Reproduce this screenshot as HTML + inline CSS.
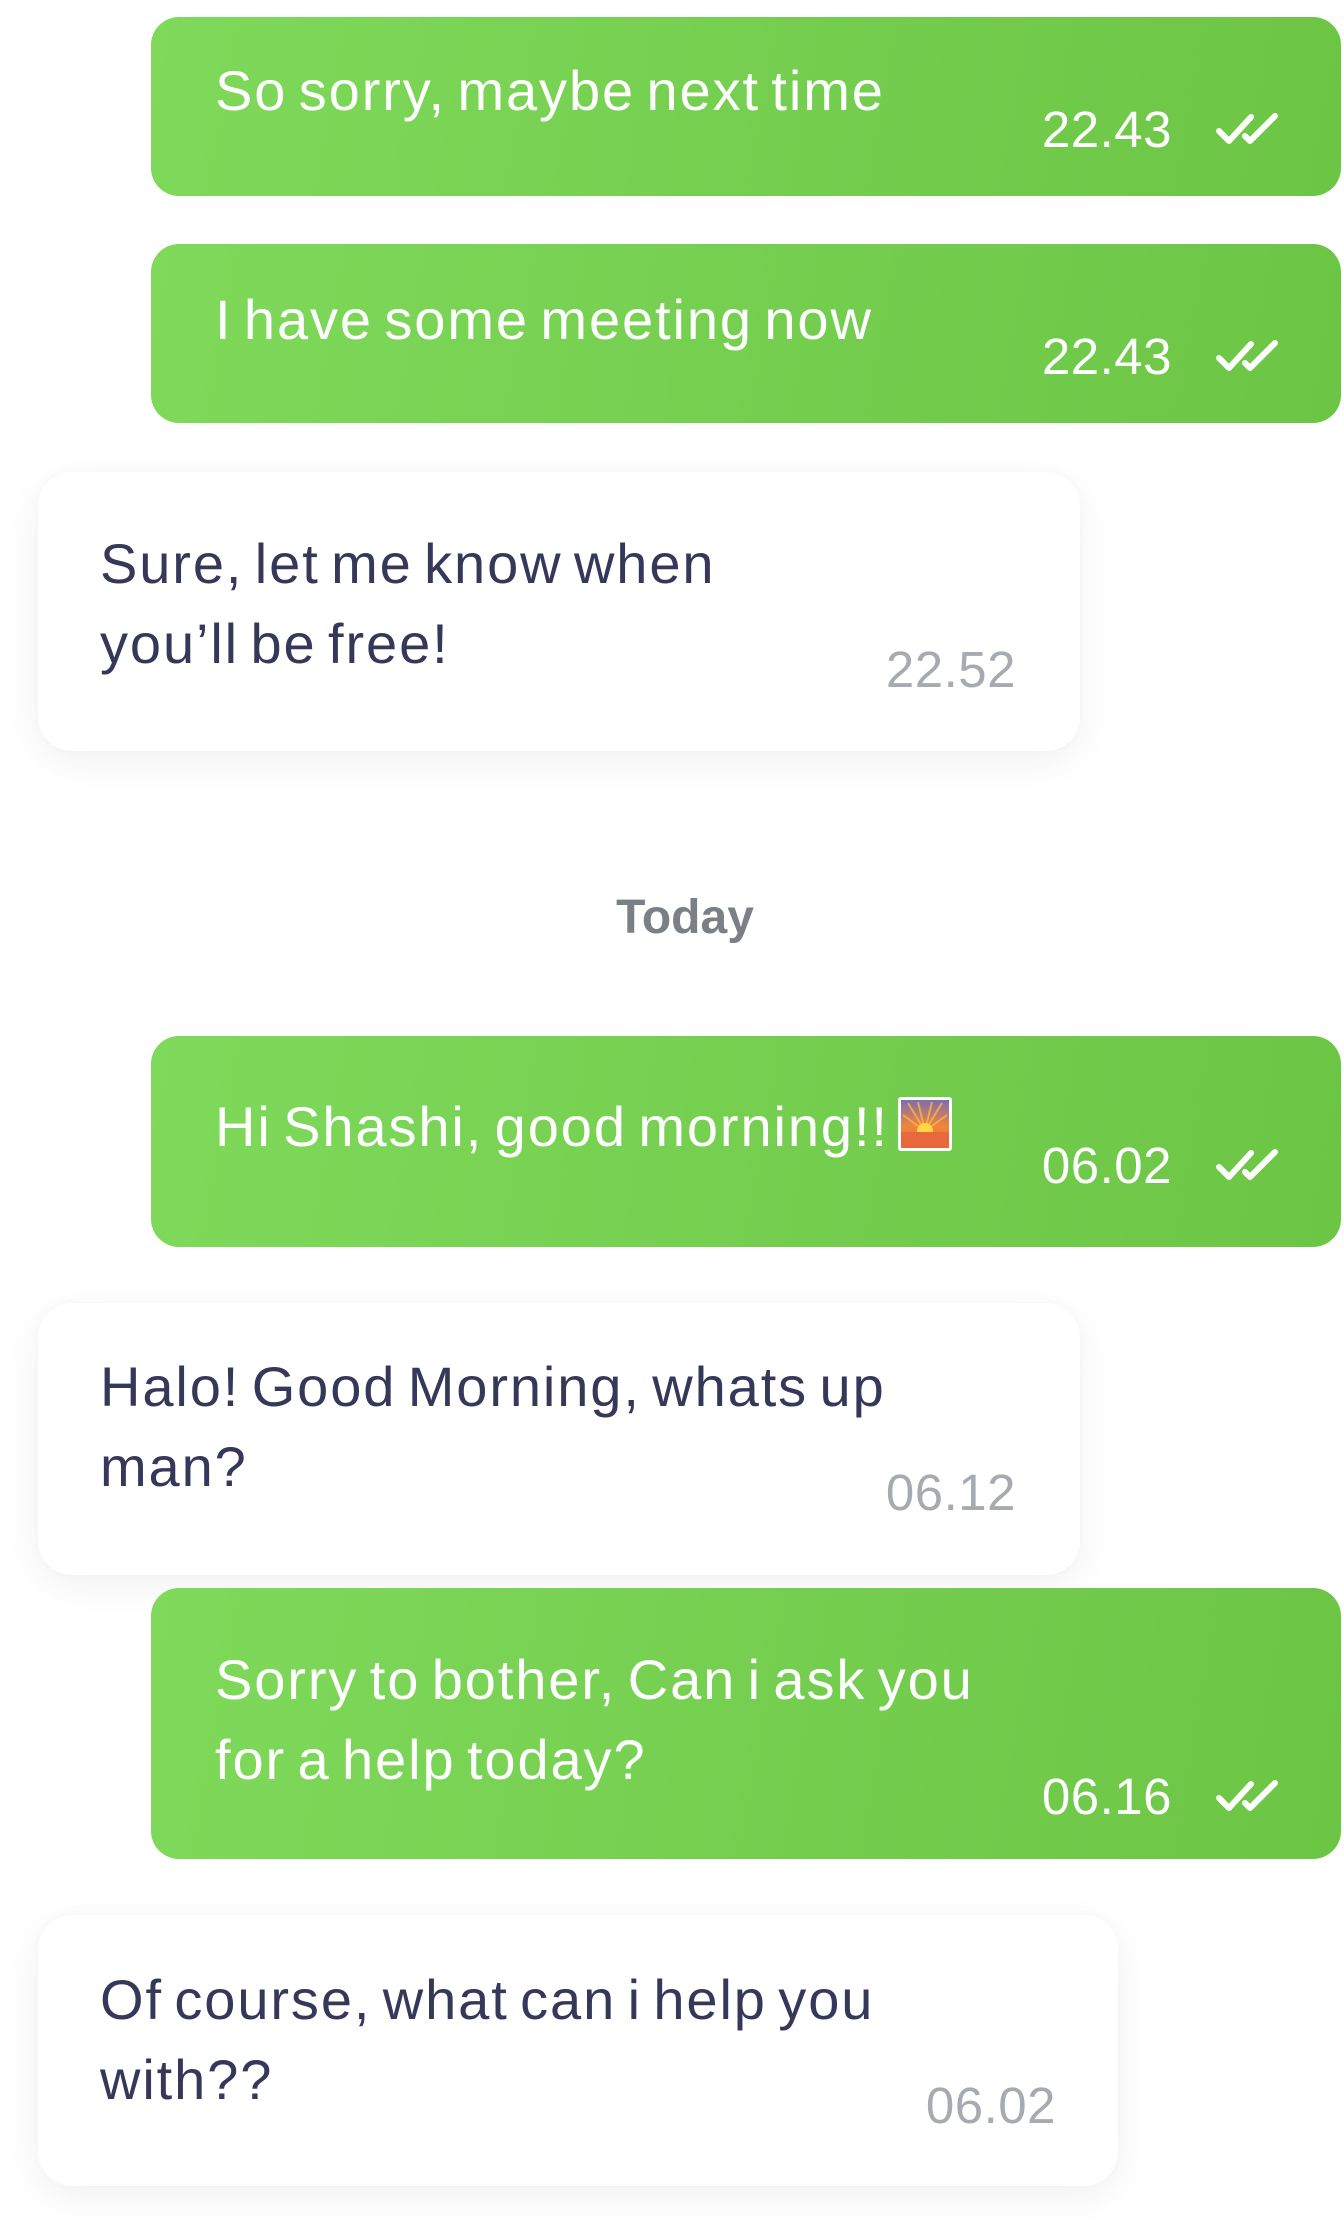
<!DOCTYPE html>
<html><head><meta charset="utf-8">
<style>
html,body{margin:0;padding:0;background:#fff;}
body{width:1344px;height:2240px;position:relative;overflow:hidden;font-family:"Liberation Sans",sans-serif;}
.g{position:absolute;left:151px;width:1190px;border-radius:28px;background:linear-gradient(100deg,#7fd95a 0%,#6cc545 100%);}
.w{position:absolute;left:38px;border-radius:34px;background:#fff;box-shadow:0 10px 40px rgba(0,0,0,0.06),0 0 10px rgba(0,0,0,0.02);}
.t{position:absolute;font-size:56px;line-height:80px;white-space:nowrap;letter-spacing:1.9px;word-spacing:-6px;}
.gt{color:#fff;}
.wt{color:#36385a;}
.tm{position:absolute;font-size:51px;line-height:60px;white-space:nowrap;text-align:right;letter-spacing:0.5px;}
.tmg{color:#fff;right:172px;}
.tmw{color:#a7abb1;}
.ck{position:absolute;width:66px;height:34px;left:1215px;}
</style></head><body>

<div class="g" style="top:17px;height:179px;"></div>
<div class="t gt" style="left:215px;top:51px;">So sorry, maybe next time</div>
<div class="tm tmg" style="top:100px;">22.43</div>
<svg class="ck" style="top:112px;" viewBox="0 0 66 34"><path d="M4 19 L14 29 L36 5 M30 24 L35 29 L60 4" fill="none" stroke="#fff" stroke-width="6" stroke-linecap="round" stroke-linejoin="round"/></svg>

<div class="g" style="top:244px;height:179px;"></div>
<div class="t gt" style="left:215px;top:280px;">I have some meeting now</div>
<div class="tm tmg" style="top:327px;">22.43</div>
<svg class="ck" style="top:339px;" viewBox="0 0 66 34"><path d="M4 19 L14 29 L36 5 M30 24 L35 29 L60 4" fill="none" stroke="#fff" stroke-width="6" stroke-linecap="round" stroke-linejoin="round"/></svg>

<div class="w" style="top:472px;height:279px;width:1042px;"></div>
<div class="t wt" style="left:100px;top:524px;">Sure, let me know when</div>
<div class="t wt" style="left:100px;top:604px;">you’ll be free!</div>
<div class="tm tmw" style="right:328px;top:640px;">22.52</div>

<div style="position:absolute;left:0;width:1344px;top:888px;text-align:center;font-size:48px;font-weight:bold;color:#7b8087;line-height:60px;padding-left:26px;box-sizing:border-box;">Today</div>

<div class="g" style="top:1036px;height:211px;"></div>
<div class="t gt" style="left:215px;top:1087px;">Hi Shashi, good morning!!</div>
<svg style="position:absolute;left:898px;top:1097px;width:54px;height:54px;" viewBox="0 0 54 54">
<defs><linearGradient id="sk" x1="0" y1="0" x2="0" y2="1"><stop offset="0" stop-color="#7a6fb0"/><stop offset="0.55" stop-color="#f2843a"/><stop offset="1" stop-color="#e0703a"/></linearGradient></defs>
<rect x="0" y="0" width="54" height="54" rx="3" fill="#fff"/>
<rect x="3" y="3" width="48" height="48" fill="url(#sk)"/>
<g stroke="#ffb347" stroke-width="2" opacity="0.8"><path d="M27 34 L10 6 M27 34 L20 5 M27 34 L34 5 M27 34 L44 6 M27 34 L5 18 M27 34 L49 18"/></g>
<circle cx="27" cy="34" r="8" fill="#ffd54a"/>
<rect x="3" y="35" width="48" height="16" fill="#e8683c"/>
</svg>
<div class="tm tmg" style="top:1136px;">06.02</div>
<svg class="ck" style="top:1148px;" viewBox="0 0 66 34"><path d="M4 19 L14 29 L36 5 M30 24 L35 29 L60 4" fill="none" stroke="#fff" stroke-width="6" stroke-linecap="round" stroke-linejoin="round"/></svg>

<div class="w" style="top:1303px;height:272px;width:1042px;"></div>
<div class="t wt" style="left:100px;top:1347px;">Halo! Good Morning, whats up</div>
<div class="t wt" style="left:100px;top:1427px;">man?</div>
<div class="tm tmw" style="right:328px;top:1463px;">06.12</div>

<div class="g" style="top:1588px;height:271px;"></div>
<div class="t gt" style="left:215px;top:1640px;">Sorry to bother, Can i ask you</div>
<div class="t gt" style="left:215px;top:1720px;">for a help today?</div>
<div class="tm tmg" style="top:1767px;">06.16</div>
<svg class="ck" style="top:1779px;" viewBox="0 0 66 34"><path d="M4 19 L14 29 L36 5 M30 24 L35 29 L60 4" fill="none" stroke="#fff" stroke-width="6" stroke-linecap="round" stroke-linejoin="round"/></svg>

<div class="w" style="top:1915px;height:271px;width:1080px;"></div>
<div class="t wt" style="left:100px;top:1960px;">Of course, what can i help you</div>
<div class="t wt" style="left:100px;top:2040px;">with??</div>
<div class="tm tmw" style="right:288px;top:2076px;">06.02</div>

</body></html>
